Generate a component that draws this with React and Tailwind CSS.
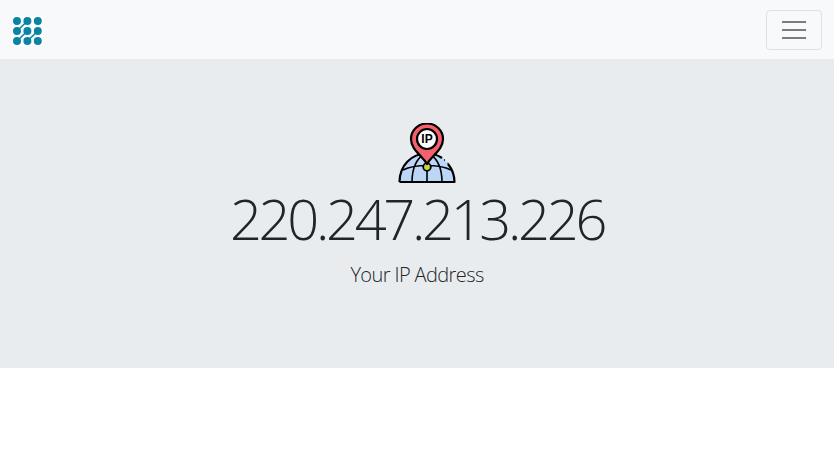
export default function App() {
  const dots = [];
  [21, 31, 41].forEach((y) => [17, 27.4, 37.8].forEach((x) => dots.push([x - 13, y - 16])));
  return (
    <div className="min-h-[473px] bg-white font-['Open_Sans',sans-serif] text-[#212529]">
      <nav className="flex h-[59px] items-center justify-between bg-[#f8f9fa] pl-[13px] pr-3">
        <svg width="30" height="30" viewBox="0 0 30 30" className="mt-[3px] bg-white" aria-label="logo">
          <g fill="#0a84a5">
            {dots.map(([x, y]) => <circle key={`${x}-${y}`} cx={x} cy={y} r="4" />)}
          </g>
          <path d="M14.4 5 L4 15 M24.8 15 L14.4 25 M14.4 15 L4 25" stroke="#0a84a5" strokeWidth="1.6" />
        </svg>
        <button className="flex h-10 w-14 items-center justify-center rounded border border-[#00000019]">
          <svg width="30" height="30" viewBox="0 0 30 30">
            <path d="M3 7h24M3 15h24M3 23h24" stroke="#00000080" strokeWidth="2" strokeMiterlimit="10" />
          </svg>
        </button>
      </nav>
      <section className="flex h-[309px] flex-col items-center bg-[#e9ecef] pt-16">
        <svg width="60" height="62" viewBox="0 0 60 62" className="ml-5" aria-label="IP location icon">
          <path d="M2.5 59 C2.5 43 14 30.5 30 30.5 C46 30.5 57.5 43 57.5 59 Z" fill="#bcd6f8" />
          <path d="M2.5 59 C2.5 43 14 30.5 30 30.5 C36 30.5 41 32 45 35 M51 41 C55 46 57.5 52 57.5 59 H2.5" fill="none" stroke="#000" strokeWidth="2.2" strokeLinejoin="round" />
          <path d="M30 30 V59 M28 30 C19 36 15 47 15 59 M32 30 C41 36 45 47 45 59 M6 47 C18 41 42 41 54 47" fill="none" stroke="#000" strokeWidth="1.6" />
          <circle cx="30" cy="44" r="3.8" fill="#c6d73f" stroke="#000" strokeWidth="1.8" />
          <path d="M30 41 C25 32 14 27 14 16 A16 15.5 0 0 1 46 16 C46 27 35 32 30 41 Z" fill="#f4606c" stroke="#000" strokeWidth="2.2" strokeLinejoin="round" />
          <circle cx="30" cy="16" r="10" fill="#fff" stroke="#000" strokeWidth="2.2" />
          <text x="30" y="20.2" textAnchor="middle" fontFamily="'Liberation Sans',sans-serif" fontWeight="700" fontSize="12" fill="#000">IP</text>
          <path d="M47 37h1M50.5 40.5h1" stroke="#000" strokeWidth="1.6" />
        </svg>
        <h1 className="text-[56px] leading-[67px] font-light tracking-[-3.3px]">220.247.213.226</h1>
        <p className="mt-[8px] text-[20px] leading-[30px] font-light tracking-[-0.6px]">Your IP Address</p>
      </section>
    </div>
  );
}
